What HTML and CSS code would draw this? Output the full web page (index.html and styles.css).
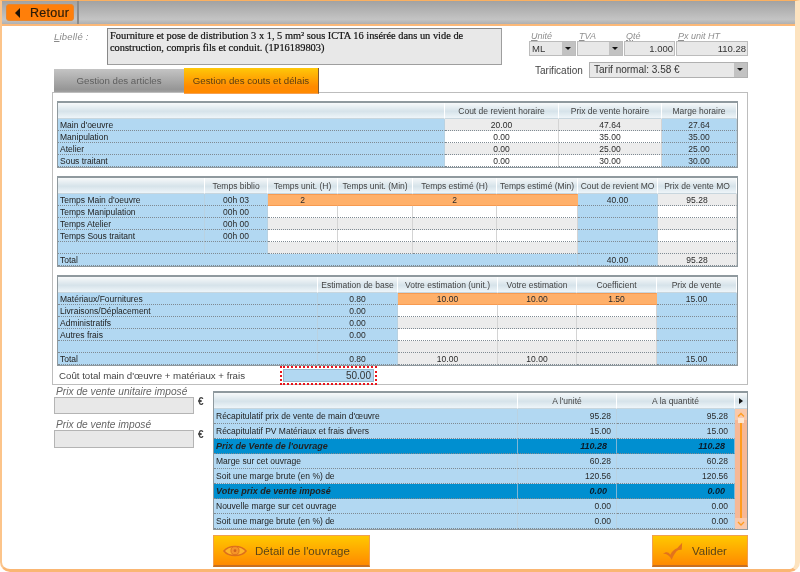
FILE: index.html
```html
<!DOCTYPE html>
<html lang="fr">
<head>
<meta charset="utf-8">
<title>Gestion des couts et délais</title>
<link rel="stylesheet" href="styles.css">
</head>
<body>
<div class="frame">
  <header class="topbar">
    <div class="topbar-left">
      <button class="back"><span class="back-arrow"></span><span>Retour</span></button>
    </div>
  </header>
  <main class="content">
    <section class="head">
      <div class="head-left">
        <div class="libelle">
          <span class="lib-label"><u>L</u>ibellé :</span>
          <div class="lib-box">Fourniture et pose de distribution 3 x 1, 5 mm² sous ICTA 16 insérée dans un vide de construction, compris fils et conduit. (1P16189803)</div>
        </div>
        <nav class="tabs">
          <div class="tab">Gestion des articles</div>
          <div class="tab tab-on">Gestion des couts et délais</div>
        </nav>
      </div>
      <div class="head-right">
        <div class="fields">
          <div class="field f-unit"><span class="cap"><u>U</u>nité</span><div class="sel">ML<i class="drop"></i></div></div>
          <div class="field f-tva"><span class="cap"><u>T</u>VA</span><div class="sel"><i class="drop"></i></div></div>
          <div class="field f-qte"><span class="cap"><u>Q</u>té</span><div class="num">1.000</div></div>
          <div class="field f-px"><span class="cap"><u>P</u>x unit HT</span><div class="num">110.28</div></div>
        </div>
        <div class="tarif">
          <span class="tarif-label">Tarification</span>
          <div class="sel sel-tarif">Tarif normal: 3.58 €<i class="drop"></i></div>
        </div>
      </div>
    </section>

    <section class="panel">
      <table class="grid t1">
        <colgroup><col><col><col><col></colgroup>
        <tr><th></th><th>Cout de revient horaire</th><th>Prix de vente horaire</th><th>Marge horaire</th></tr>
        <tr><td class="bl l">Main d'oeuvre</td><td class="gr">20.00</td><td class="gr">47.64</td><td class="bl">27.64</td></tr>
        <tr><td class="bl l">Manipulation</td><td class="wh">0.00</td><td class="wh">35.00</td><td class="bl">35.00</td></tr>
        <tr><td class="bl l">Atelier</td><td class="gr">0.00</td><td class="gr">25.00</td><td class="bl">25.00</td></tr>
        <tr><td class="bl l">Sous traitant</td><td class="wh">0.00</td><td class="wh">30.00</td><td class="bl">30.00</td></tr>
      </table>

      <table class="grid t2">
        <colgroup><col><col><col><col><col><col><col><col></colgroup>
        <tr><th></th><th>Temps biblio</th><th>Temps unit. (H)</th><th>Temps unit. (Min)</th><th>Temps estimé (H)</th><th>Temps estimé (Min)</th><th>Cout de revient MO</th><th>Prix de vente MO</th></tr>
        <tr><td class="bl l">Temps Main d'oeuvre</td><td class="bl">00h 03</td><td class="or">2</td><td class="or"></td><td class="or">2</td><td class="or"></td><td class="bl">40.00</td><td class="gr">95.28</td></tr>
        <tr><td class="bl l">Temps Manipulation</td><td class="bl">00h 00</td><td class="wh"></td><td class="wh"></td><td class="wh"></td><td class="wh"></td><td class="bl"></td><td class="wh"></td></tr>
        <tr><td class="bl l">Temps Atelier</td><td class="bl">00h 00</td><td class="gr"></td><td class="gr"></td><td class="gr"></td><td class="gr"></td><td class="bl"></td><td class="gr"></td></tr>
        <tr><td class="bl l">Temps Sous traitant</td><td class="bl">00h 00</td><td class="wh"></td><td class="wh"></td><td class="wh"></td><td class="wh"></td><td class="bl"></td><td class="wh"></td></tr>
        <tr><td class="bl l"></td><td class="bl"></td><td class="gr"></td><td class="gr"></td><td class="gr"></td><td class="gr"></td><td class="bl"></td><td class="gr"></td></tr>
        <tr><td class="bl l" colspan="6">Total</td><td class="bl">40.00</td><td class="gr">95.28</td></tr>
      </table>

      <table class="grid t3">
        <colgroup><col><col><col><col><col><col></colgroup>
        <tr><th></th><th>Estimation de base</th><th>Votre estimation (unit.)</th><th>Votre estimation</th><th>Coefficient</th><th>Prix de vente</th></tr>
        <tr><td class="bl l">Matériaux/Fournitures</td><td class="bl">0.80</td><td class="or">10.00</td><td class="or">10.00</td><td class="or">1.50</td><td class="bl">15.00</td></tr>
        <tr><td class="bl l">Livraisons/Déplacement</td><td class="bl">0.00</td><td class="wh"></td><td class="wh"></td><td class="wh"></td><td class="bl"></td></tr>
        <tr><td class="bl l">Administratifs</td><td class="bl">0.00</td><td class="gr"></td><td class="gr"></td><td class="gr"></td><td class="bl"></td></tr>
        <tr><td class="bl l">Autres frais</td><td class="bl">0.00</td><td class="wh"></td><td class="wh"></td><td class="wh"></td><td class="bl"></td></tr>
        <tr><td class="bl l"></td><td class="bl"></td><td class="gr"></td><td class="gr"></td><td class="gr"></td><td class="bl"></td></tr>
        <tr><td class="bl l">Total</td><td class="bl">0.80</td><td class="gr">10.00</td><td class="gr">10.00</td><td class="gr"></td><td class="bl">15.00</td></tr>
      </table>

      <div class="total">
        <span class="total-label">Coût total main d'œuvre + matériaux + frais</span>
        <div class="total-dots"><div class="total-val">50.00</div></div>
      </div>
    </section>

    <section class="lower">
      <div class="imposed">
        <label class="imp-label">Prix de vente unitaire imposé</label>
        <div class="imp-row"><div class="imp-input"></div><span class="euro">€</span></div>
        <label class="imp-label imp-second">Prix de vente imposé</label>
        <div class="imp-row"><div class="imp-input imp-tall"></div><span class="euro">€</span></div>
      </div>
      <div class="recap-col">
        <table class="grid recap">
          <colgroup><col><col><col><col></colgroup>
          <tr><th></th><th>A l'unité</th><th>A la quantité</th><th class="arrow-th"><i class="arrow-r"></i></th></tr>
          <tr><td class="bl l">Récapitulatif prix de vente de main d'œuvre</td><td class="bl r">95.28</td><td class="bl r r2">95.28</td>
            <td class="scroll" rowspan="8">
              <svg class="scroll-svg" viewBox="0 0 12 120" aria-hidden="true">
                <rect x="0" y="0" width="12" height="120" fill="#f6b896"/>
                <rect x="0" y="0" width="12" height="11" fill="#f9c9ab"/>
                <rect x="0" y="109" width="12" height="11" fill="#f9c9ab"/>
                <rect x="5" y="9" width="2" height="100" fill="#ff9c1e"/>
                <path d="M3 7.5 L6 4.5 L9 7.5" fill="none" stroke="#ff9c1e" stroke-width="1.3"/>
                <path d="M3 113 L6 116 L9 113" fill="none" stroke="#ff9c1e" stroke-width="1.3"/>
                <rect x="3" y="9" width="6" height="5" fill="#fde6d0"/>
              </svg>
            </td></tr>
          <tr><td class="bl l">Récapitulatif PV Matériaux et frais divers</td><td class="bl r">15.00</td><td class="bl r r2">15.00</td></tr>
          <tr class="dark"><td class="l">Prix de Vente de l'ouvrage</td><td class="r">110.28</td><td class="r r2">110.28</td></tr>
          <tr><td class="bl l">Marge sur cet ouvrage</td><td class="bl r">60.28</td><td class="bl r r2">60.28</td></tr>
          <tr><td class="bl l">Soit une marge brute (en %) de</td><td class="bl r">120.56</td><td class="bl r r2">120.56</td></tr>
          <tr class="dark"><td class="l">Votre prix de vente imposé</td><td class="r">0.00</td><td class="r r2">0.00</td></tr>
          <tr><td class="bl l">Nouvelle marge sur cet ouvrage</td><td class="bl r">0.00</td><td class="bl r r2">0.00</td></tr>
          <tr><td class="bl l">Soit une marge brute (en %) de</td><td class="bl r">0.00</td><td class="bl r r2">0.00</td></tr>
        </table>
        <div class="actions">
          <button class="action act-detail">
            <svg class="eye" viewBox="0 0 26 16" aria-hidden="true">
              <path d="M1 8 C6 1.5 20 1.5 25 8 C20 14.5 6 14.5 1 8 Z" fill="#ffb428" stroke="#dc6f1c" stroke-width="1.5"/>
              <circle cx="13" cy="7.6" r="4.4" fill="#f59428" stroke="#dc6f1c" stroke-width="1"/>
              <circle cx="13" cy="7.6" r="1.5" fill="#d0641a"/>
            </svg>
            <span>Détail de l'ouvrage</span>
          </button>
          <button class="action act-ok">
            <svg class="check" viewBox="0 0 24 20" aria-hidden="true">
              <path d="M1 13 C4 10.5 7 10.5 9 14 C11 10 14 8 16.5 7 L22 1 L21.5 8.5 L18 9 C15 10.5 13 14 10.5 19.5 C8.5 15 5 13 1 13 Z" fill="#e2731c"/>
            </svg>
            <span>Valider</span>
          </button>
        </div>
      </div>
    </section>
  </main>
</div>
</body>
</html>
```
FILE: styles.css
```css
* { box-sizing: border-box; }
html, body { margin: 0; padding: 0; background: #fff; }
body { font-family: "Liberation Sans", Arial, sans-serif; color: #333; width: 800px; height: 572px; overflow: hidden; }

.frame {
  width: 800px; height: 572px;
  background: #fff;
  border-top: 1px solid #fbb060;
  border-left: 2px solid #fcc48a;
  border-right: 5px solid #fde3bf;
  border-bottom: 3px solid #fab673;
  border-radius: 0 0 10px 10px;
  filter: blur(0.35px);
}

.topbar {
  height: 25px;
  background: linear-gradient(#a2a2a2, #c4c4c4 80%, #b0b0b0);
  border-bottom: 2px solid #fbb878;
  display: flex;
}
.topbar-left { width: 77px; padding: 3px 0 0 4px; border-right: 2px solid #8b8b8b; }
.back {
  width: 68px; height: 17px; padding: 0 0 0 8px; margin: 0;
  display: flex; align-items: center; gap: 10px;
  background: #ff7f0a; border: 1px solid #e8862e; border-radius: 3px;
  font: 12.5px "Liberation Sans", Arial, sans-serif; letter-spacing: .3px; color: #2c1c08;
  -webkit-text-stroke: .2px #2c1c08;
}
.back-arrow { width: 0; height: 0; border: 5px solid transparent; border-left: 0; border-right: 5px solid #1d1206; }

.content { padding-left: 50px; }

.head { display: flex; height: 67px; }
.head-left { width: 477px; }
.libelle { display: flex; padding: 2px 0 0 2px; height: 39px; }
.lib-label { width: 53px; padding-top: 3px; font-size: 9.5px; font-style: italic; color: #8a8a8a; letter-spacing: .2px; }
.lib-box {
  width: 395px; height: 37px; padding: 1px 2px;
  background: #e8e8e8; border: 1px solid #9e9e9e; border-top-color: #888; border-left-color: #888;
  font: 10.4px/12px "Liberation Serif", "Times New Roman", serif; color: #111;
  -webkit-text-stroke: .2px #111;
}
.tabs { display: flex; align-items: flex-end; height: 28px; padding-left: 2px; }
.tab {
  width: 130px; height: 24px; padding-top: 6px; text-align: center;
  background: linear-gradient(#c4c4c4, #969696 85%, #a4a4a4);
  font-size: 9.7px; color: #5e5e5e;
}
.tab-on {
  position: relative; z-index: 1;
  width: 135px; height: 26px; margin-bottom: -1px; padding-top: 7px;
  background: linear-gradient(#ffc808, #ff8a00 75%, #ff8a00);
  border-right: 1px solid #7d5a38; border-bottom: 1px solid #f6a050;
  color: #5a3c14;
}

.head-right { width: 219px; padding-top: 4px; }
.fields { display: flex; gap: 1px; height: 26px; }
.field { display: flex; flex-direction: column; }
.cap { height: 11px; font-size: 9px; line-height: 12px; font-style: italic; color: #8f8f8f; padding-left: 2px; }
.f-unit { width: 47px; }
.f-tva { width: 46px; }
.f-qte { width: 51px; }
.f-px { width: 72px; }
.sel, .num {
  position: relative; height: 15px;
  background: #e8e8e8; border: 1px solid #bcbcbc;
  font-size: 9.5px; line-height: 13px; color: #333; padding: 0 1px 0 2px;
}
.num { text-align: right; }
.drop {
  position: absolute; right: 0; top: 0; bottom: 0; width: 13px; background: #c2c2c2;
}
.drop::after {
  content: ""; position: absolute; left: 3px; top: 5px;
  border: 3.5px solid transparent; border-top: 3.5px solid #111; border-bottom: 0;
}
.tarif { display: flex; align-items: center; margin-top: 6px; padding-left: 6px; }
.tarif-label { width: 54px; font-size: 10px; color: #444; }
.sel-tarif { width: 159px; height: 16px; padding-left: 4px; font-size: 10px; line-height: 14px; border-color: #b0b0b0; }

.panel {
  position: relative;
  width: 696px; height: 293px; margin-top: -1px;
  padding: 8px 0 0 4px;
  border: 1px solid #bdbdbd;
}

.grid {
  table-layout: fixed; border-collapse: separate; border-spacing: 0;
  font-size: 8.5px; color: #333;
  border: 1px solid #8f999e; border-top-width: 2px;
}
.t1, .t2, .t3 { width: 681px; margin-bottom: 8px; }
.grid th {
  height: 16px; padding: 0; font-weight: normal; color: #444; font-size: 8.5px;
  background: linear-gradient(#f7f9fa, #d6e3ea 55%, #eef5f9);
  border-right: 1px solid #fff; border-bottom: 1px solid #c8d6de; white-space: nowrap; overflow: hidden;
}
.grid td {
  height: 12px; padding: 1px 0 0; line-height: 10px; text-align: center; white-space: nowrap; overflow: hidden;
  border-bottom: 1px dotted #7f8a92; border-right: 1px solid #d4d4d4;
  color: #2a2a2a;
}
.grid td.l { text-align: left; padding-left: 2px; color: #222; }
.grid td.r { text-align: right; padding-right: 5px; }
.grid td.r2 { padding-right: 6px; }
.bl { background: #b2d8f2; }
.gr { background: #ececec; }
.wh { background: #fff; }
.grid td.or { padding: 0; background: #ffb06a; border-top: 1px solid #f79a50; border-bottom: 1px solid #f79a50; border-right-color: #ffb06a; }
.grid td.bl { border-right-color: #b9d2e2; }

.t1 col:nth-child(1) { width: 387px; }
.t1 col:nth-child(2) { width: 114px; }
.t1 col:nth-child(3) { width: 103px; }
.t1 col:nth-child(4) { width: 75px; }

.t2 col:nth-child(1) { width: 147px; }
.t2 col:nth-child(2) { width: 63px; }
.t2 col:nth-child(3) { width: 70px; }
.t2 col:nth-child(4) { width: 75px; }
.t2 col:nth-child(5) { width: 84px; }
.t2 col:nth-child(6) { width: 81px; }
.t2 col:nth-child(7) { width: 80px; }
.t2 col:nth-child(8) { width: 79px; }

.t3 { margin-bottom: 0; }
.t3 col:nth-child(1) { width: 260px; }
.t3 col:nth-child(2) { width: 80px; }
.t3 col:nth-child(3) { width: 100px; }
.t3 col:nth-child(4) { width: 79px; }
.t3 col:nth-child(5) { width: 80px; }
.t3 col:nth-child(6) { width: 80px; }

.total { display: flex; align-items: center; height: 19px; padding-left: 2px; }
.total-label { width: 221px; font-size: 9.7px; color: #444; }
.total-dots { width: 97px; height: 19px; padding: 1px; border: 2px dotted #e8141c; }
.total-val { height: 13px; background: #b2d8f2; border: 1px solid #9cb8cc; text-align: right; padding-right: 2px; font-size: 10px; line-height: 12px; color: #333; }

.lower { display: flex; margin-top: 6px; }
.imposed { width: 161px; padding-left: 2px; margin-top: -5px; }
.imp-label { display: block; height: 11px; font-size: 10.2px; line-height: 11px; font-style: italic; color: #666; padding-left: 2px; white-space: nowrap; }
.imp-second { margin-top: 5px; }
.imp-row { display: flex; gap: 4px; }
.imp-input { width: 140px; height: 17px; background: #e8e8e8; border: 1px solid #b4b4b4; }
.imp-tall { height: 18px; }
.euro { font-size: 10px; font-weight: bold; color: #444; margin-top: -1px; }

.recap-col { width: 535px; }
.recap { width: 535px; }
.recap col:nth-child(1) { width: 304px; }
.recap col:nth-child(2) { width: 99px; }
.recap col:nth-child(3) { width: 118px; }
.recap col:nth-child(4) { width: 12px; }
.recap td { height: 15px; padding-top: 0; line-height: 14px; border-right-color: #c4d4de; }
.dark td { background: #008fd0; font-size: 9px; font-style: italic; font-weight: bold; color: #0a1a28; border-right-color: #7fb6d6; }
.grid .dark td.r { padding-right: 9px; }
.grid td.scroll { padding: 0; border: 0; background: #f6b896; vertical-align: top; }
.scroll-svg { display: block; width: 12px; height: 120px; }
.grid th.arrow-th { border-right: 0; text-align: center; }
.arrow-r { display: inline-block; width: 0; height: 0; border: 3px solid transparent; border-right: 0; border-left: 4px solid #111; }

.actions { display: flex; justify-content: space-between; margin-top: 5px; }
.action {
  height: 32px; padding: 0; margin: 0; display: flex; align-items: center;
  background: linear-gradient(#ffc800, #ff8a00);
  border: 1px solid #f0a050; border-bottom: 2px solid #c9701f;
  font: 11.5px "Liberation Sans", Arial, sans-serif; color: #5a4418;
}
.act-detail { width: 157px; padding-left: 9px; gap: 8px; }
.act-ok { width: 96px; padding-left: 9px; gap: 8px; }
.eye { width: 24px; height: 16px; }
.check { width: 22px; height: 20px; }
```
